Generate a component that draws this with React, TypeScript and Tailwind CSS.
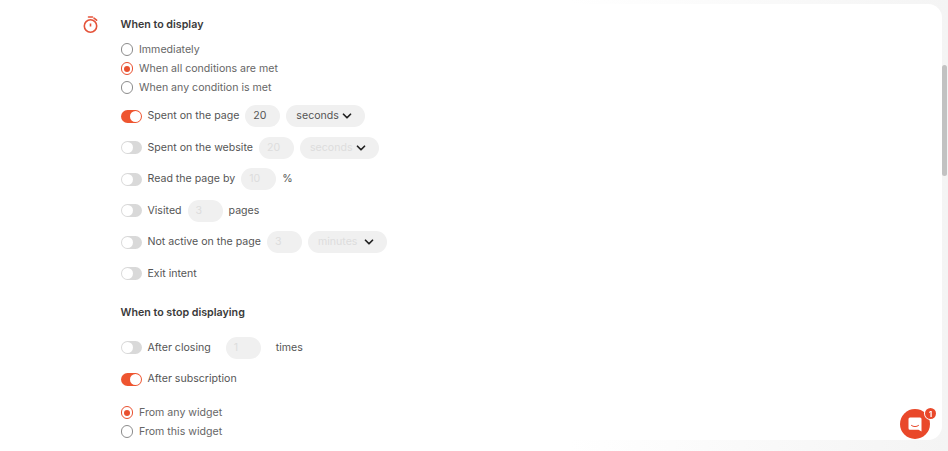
import { ChevronDown } from 'lucide-react';

const font = { fontFamily: 'Inter, "Open Sans", sans-serif' };

function Radio({ label, checked }: { label: string; checked?: boolean }) {
  return (
    <div className="flex h-[19px] items-center gap-[6px]">
      <span
        className={`flex h-[12.5px] w-[12.5px] items-center justify-center rounded-full border bg-white ${
          checked ? 'border-[#e9502f]' : 'border-[#8c8c8c]'
        }`}
      >
        {checked && <span className="h-1.5 w-1.5 rounded-full bg-[#e9502f]"></span>}
      </span>
      <span className="text-[10.6px] text-[#666666]">{label}</span>
    </div>
  );
}

function Toggle({ on }: { on?: boolean }) {
  return (
    <span
      className={`flex h-[13px] w-[21px] items-center rounded-full px-[1px] ${
        on ? 'justify-end bg-[#ee5530]' : 'justify-start bg-[#d9d9d9]'
      }`}
    >
      <span className="h-[11px] w-[11px] rounded-full bg-white"></span>
    </span>
  );
}

function NumberBox({ value, active }: { value: string; active?: boolean }) {
  return (
    <span
      className={`flex h-[22px] w-[35px] items-center rounded-full bg-[#f0f0f0] pl-2 text-[10.6px] ${
        active ? 'text-[#555555]' : 'text-[#dddddd]'
      }`}
    >
      {value}
    </span>
  );
}

function Unit({ value, active }: { value: string; active?: boolean }) {
  return (
    <span
      className={`flex h-[22px] w-[79px] items-center justify-between rounded-full bg-[#f0f0f0] pl-2.5 pr-[11px] text-[10.6px] ${
        active ? 'text-[#555555]' : 'text-[#dddddd]'
      }`}
    >
      {value}
      <ChevronDown size={14} strokeWidth={3} className="text-[#222222]" />
    </span>
  );
}

function Row({ on, label, children, gap = 'gap-[6px]' }: { on?: boolean; label: string; children?: React.ReactNode; gap?: string }) {
  return (
    <div className="flex h-[31.5px] items-center">
      <Toggle on={on} />
      <div className={`ml-[6px] flex items-center ${gap}`}>
        <span className="text-[10.6px] text-[#555555]">{label}</span>
        {children}
      </div>
    </div>
  );
}

function Heading({ children }: { children: React.ReactNode }) {
  return <h3 className="text-[10.7px] font-semibold leading-4 text-[#3a3a3a]">{children}</h3>;
}

export default function App() {
  return (
    <div className="flex h-[451px] w-[948px] overflow-hidden bg-linear-to-r from-white from-60% to-[#f4f4f4]" style={font}>
      <div className="mt-[4px] flex h-[436px] w-[942px] rounded-r-[14px] bg-white pl-[83px] pt-[13px]">
        <svg width="16" height="18" viewBox="0 0 16 18" fill="none" stroke="#e5533a" strokeWidth="1.6" className="mr-[21.5px] -mt-[1px]">
          <circle cx="7.5" cy="10" r="6.2" />
          <path d="M7.5 7.5v3" />
          <path d="M5.5 1h4M11 2.2l2.6 2" strokeLinecap="round" />
        </svg>
        <div className="w-[400px]">
          <Heading>When to display</Heading>
          <div className="mt-[7px]">
            <Radio label="Immediately" />
            <Radio label="When all conditions are met" checked />
            <Radio label="When any condition is met" />
          </div>
          <div className="mt-[3.5px]">
            <Row on label="Spent on the page">
              <NumberBox value="20" active />
              <Unit value="seconds" active />
            </Row>
            <Row label="Spent on the website">
              <NumberBox value="20" />
              <Unit value="seconds" />
            </Row>
            <Row label="Read the page by">
              <NumberBox value="10" />
              <span className="text-[10.6px] text-[#555555]">%</span>
            </Row>
            <Row label="Visited">
              <NumberBox value="3" />
              <span className="text-[10.6px] text-[#555555]">pages</span>
            </Row>
            <Row label="Not active on the page">
              <NumberBox value="3" />
              <Unit value="minutes" />
            </Row>
            <Row label="Exit intent" />
          </div>
          <div className="mt-[15.5px]">
            <Heading>When to stop displaying</Heading>
          </div>
          <div className="mt-[11px]">
            <Row label="After closing" gap="gap-[15px]">
              <NumberBox value="1" />
              <span className="text-[10.6px] text-[#555555]">times</span>
            </Row>
            <Row on label="After subscription" />
          </div>
          <div className="mt-[8px]">
            <Radio label="From any widget" checked />
            <Radio label="From this widget" />
          </div>
        </div>
      </div>
      <div className="mt-[65px] h-[111px] w-[5px] rounded-sm bg-[#c2c2c2]"></div>
      <button className="fixed left-[900px] top-[409px] flex h-[30px] w-[30px] items-center justify-center rounded-full bg-[#e9482a]">
        <svg width="14" height="15" viewBox="0 0 14 15" fill="white">
          <path d="M2 0.5h10a1.5 1.5 0 0 1 1.5 1.5v12.5l-3-1.8H2A1.5 1.5 0 0 1 .5 11.2V2A1.5 1.5 0 0 1 2 .5z" />
          <path d="M3.5 8.5c2 1.5 5 1.5 7 0" stroke="#e9482a" strokeWidth="1" fill="none" strokeLinecap="round" />
        </svg>
        <span className="absolute -right-[6px] -top-[1px] flex h-[11px] w-[11px] items-center justify-center rounded-full bg-[#e9482a] text-[8px] font-bold text-white ring-1 ring-white">
          1
        </span>
      </button>
    </div>
  );
}
